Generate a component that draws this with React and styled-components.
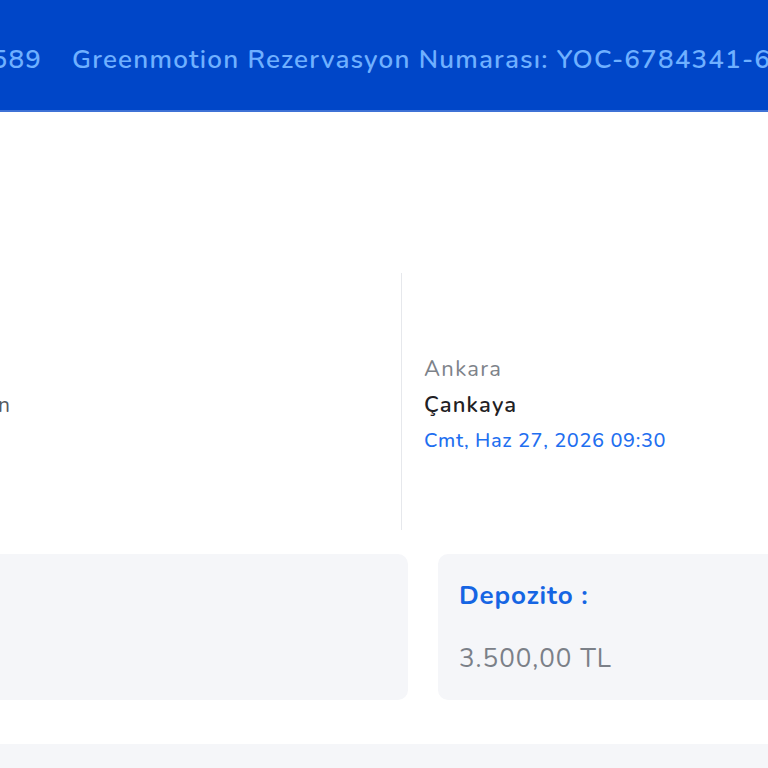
import React from 'react';
import styled, { createGlobalStyle } from 'styled-components';

const GlobalStyle = createGlobalStyle`
  html, body {
    margin: 0;
    padding: 0;
    background: #ffffff;
    overflow: hidden;
  }
  body {
    font-family: "Nunito", "Lato", "Open Sans", sans-serif;
    color: #222;
  }
  * { box-sizing: border-box; }
`;

const Page = styled.div`
  width: 1600px;
  margin-left: -400px;
  display: flex;
  flex-direction: column;
`;

const TopBar = styled.header`
  height: 112px;
  padding-top: 8px;
  background: #0046c8;
  border-bottom: 2px solid #3f72d6;
  display: flex;
  align-items: center;
  gap: 30px;
  white-space: nowrap;
`;

const BarItem = styled.span`
  font-size: 26px;
  font-weight: 600;
  letter-spacing: 1.2px;
  color: #6fb0ff;
  width: ${p => (p.$width ? `${p.$width}px` : 'auto')};
  text-align: ${p => (p.$width ? 'right' : 'left')};
  flex-shrink: 0;
`;

const Spacer = styled.div`
  height: 161px;
`;

const LocationRow = styled.section`
  display: flex;
  height: 257px;
`;

const LocationCol = styled.div`
  width: ${p => p.$width}px;
  display: flex;
  flex-direction: column;
  justify-content: center;
  padding-left: ${p => p.$pad || 0}px;
  padding-top: 6px;
  border-right: ${p => (p.$divider ? '1px solid #e6e8ec' : 'none')};
`;

const LeftInfo = styled.div`
  width: 411px;
  text-align: right;
  font-size: 21px;
  letter-spacing: 1px;
  color: #555a60;
  white-space: nowrap;
`;

const City = styled.div`
  font-size: 22px;
  letter-spacing: 1.3px;
  color: #7d8289;
  line-height: 35px;
`;

const District = styled.div`
  font-size: 22px;
  font-weight: 600;
  letter-spacing: 1.2px;
  color: #1f2124;
  line-height: 36px;
`;

const DateText = styled.div`
  font-size: 20px;
  font-weight: 500;
  letter-spacing: 0.6px;
  color: #1f6ff0;
  line-height: 35px;
`;

const CardGrid = styled.section`
  display: grid;
  grid-template-columns: 808px 1fr;
  gap: 30px;
  margin-top: 24px;
`;

const InfoCard = styled.div`
  height: 146px;
  background: #f5f6f9;
  border-radius: 10px;
  padding: 22px 21px;
  display: flex;
  flex-direction: column;
  gap: 23px;
`;

const CardLabel = styled.div`
  font-size: 26px;
  font-weight: 700;
  letter-spacing: 0.8px;
  color: #1565e3;
  line-height: 40px;
`;

const CardValue = styled.div`
  font-size: 26px;
  letter-spacing: 1px;
  color: #7b8088;
  line-height: 40px;
`;

const BottomBand = styled.div`
  margin-top: 44px;
  height: 120px;
  background: #f5f6f9;
  border-radius: 10px 10px 0 0;
`;

export default function App() {
  return (
    <>
      <GlobalStyle />
      <Page>
        <TopBar>
          <BarItem $width={442}>Rezervasyon No: 12345589</BarItem>
          <BarItem>Greenmotion Rezervasyon Numarası: YOC-6784341-6598</BarItem>
        </TopBar>
        <Spacer />
        <LocationRow>
          <LocationCol $width={802} $divider>
            <LeftInfo>Esenboğa Havalimanı Gelen</LeftInfo>
          </LocationCol>
          <LocationCol $width={700} $pad={22}>
            <City>Ankara</City>
            <District>Çankaya</District>
            <DateText>Cmt, Haz 27, 2026 09:30</DateText>
          </LocationCol>
        </LocationRow>
        <CardGrid>
          <InfoCard>
            <CardLabel>Toplam Tutar :</CardLabel>
            <CardValue>12.450,00 TL</CardValue>
          </InfoCard>
          <InfoCard>
            <CardLabel>Depozito :</CardLabel>
            <CardValue>3.500,00 TL</CardValue>
          </InfoCard>
        </CardGrid>
        <BottomBand />
      </Page>
    </>
  );
}
